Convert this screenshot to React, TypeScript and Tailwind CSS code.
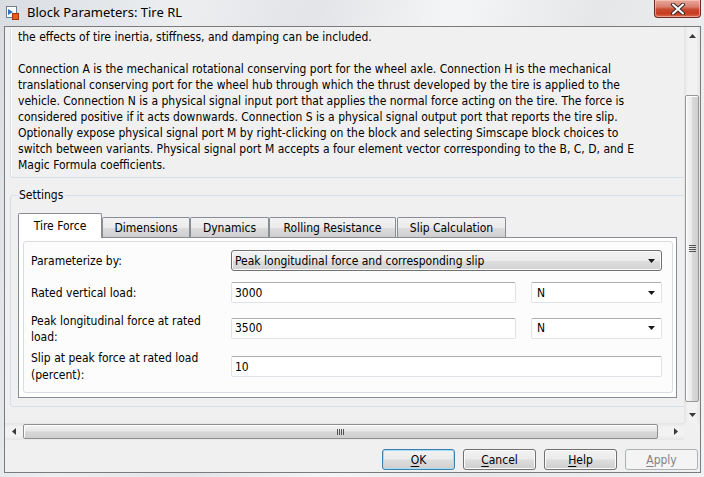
import React from "react";

const BODY =
  "font-['DejaVu_Sans_Condensed','DejaVu_Sans',sans-serif] [font-stretch:condensed] text-[12px]";

function Tri({ dir, color = "#1a1a1a" }: { dir: "up" | "down" | "left" | "right"; color?: string }) {
  if (dir === "up")
    return (
      <svg width="7" height="4" viewBox="0 0 7 4">
        <path d="M0 4 L3.5 0 L7 4 Z" fill={color} />
      </svg>
    );
  if (dir === "down")
    return (
      <svg width="7" height="4" viewBox="0 0 7 4">
        <path d="M0 0 L7 0 L3.5 4 Z" fill={color} />
      </svg>
    );
  if (dir === "left")
    return (
      <svg width="4" height="7" viewBox="0 0 4 7">
        <path d="M4 0 L4 7 L0 3.5 Z" fill={color} />
      </svg>
    );
  return (
    <svg width="4" height="7" viewBox="0 0 4 7">
      <path d="M0 0 L4 3.5 L0 7 Z" fill={color} />
    </svg>
  );
}

function BlockIcon() {
  return (
    <svg width="14" height="15" viewBox="0 0 14 15">
      <rect x="0.5" y="0.5" width="10" height="11" fill="#fff" stroke="#6d7f93" />
      <path d="M2 3 L7 6 L2 9 Z" fill="#2f6fc4" />
      <rect x="6.5" y="7.5" width="6" height="6" fill="#f05a1a" stroke="#a13307" />
    </svg>
  );
}

function CloseX() {
  return (
    <svg width="16" height="12" viewBox="0 0 16 12">
      <path d="M3 1.5 L13 10.5 M13 1.5 L3 10.5" stroke="#3b2a2a" strokeWidth="4" strokeLinecap="round" />
      <path d="M3 1.5 L13 10.5 M13 1.5 L3 10.5" stroke="#ffffff" strokeWidth="2" strokeLinecap="round" />
    </svg>
  );
}

const hiddenLine =
  "Represents a tire with longitudinal behavior given by the Magic Formula, an empirical equation. Optionally,";

const descLines = [
  "the effects of tire inertia, stiffness, and damping can be included.",
  "",
  "Connection A is the mechanical rotational conserving port for the wheel axle. Connection H is the mechanical",
  "translational conserving port for the wheel hub through which the thrust developed by the tire is applied to the",
  "vehicle. Connection N is a physical signal input port that applies the normal force acting on the tire. The force is",
  "considered positive if it acts downwards. Connection S is a physical signal output port that reports the tire slip.",
  "Optionally expose physical signal port M by right-clicking on the block and selecting Simscape block choices to",
  "switch between variants. Physical signal port M accepts a four element vector corresponding to the B, C, D, and E",
  "Magic Formula coefficients.",
];

function TextBox({ value, className = "" }: { value: string; className?: string }) {
  return (
    <div
      className={
        "h-[21px] rounded-[2px] border border-[#dfe3e8] border-t-[#abadb3] bg-white flex items-center pl-[3px] " +
        className
      }
    >
      {value}
    </div>
  );
}

function UnitBox({ value }: { value: string }) {
  return (
    <div className="ml-[15px] w-[131px] h-[21px] rounded-[2px] border border-[#dfe3e8] border-t-[#abadb3] bg-white flex items-center pl-[5px] pr-[6px]">
      <span className="flex-1">{value}</span>
      <Tri dir="down" />
    </div>
  );
}

function Button({ children, kind = "normal" }: { children: React.ReactNode; kind?: "normal" | "default" | "disabled" }) {
  const base = "w-[73px] h-[21px] rounded-[3px] border flex items-center justify-center";
  const cls =
    kind === "disabled"
      ? "border-[#adb2b5] bg-[#f4f4f4] text-[#838383]"
      : kind === "default"
      ? "border-[#3c7fb1] shadow-[inset_0_0_0_1px_#a6dcf7] bg-[linear-gradient(180deg,#f2f2f2_0%,#ebebeb_48%,#dddddd_52%,#cfcfcf_100%)] text-black"
      : "border-[#707070] shadow-[inset_0_0_0_1px_#fcfcfc] bg-[linear-gradient(180deg,#f2f2f2_0%,#ebebeb_48%,#dddddd_52%,#cfcfcf_100%)] text-black";
  return <div className={base + " " + cls}>{children}</div>;
}

const tabs = [
  { name: "Tire Force", w: "w-[84px]" },
  { name: "Dimensions", w: "w-[88px]" },
  { name: "Dynamics", w: "w-[79px]" },
  { name: "Rolling Resistance", w: "w-[127px]" },
  { name: "Slip Calculation", w: "w-[109px] ml-[1px]" },
];

export default function App() {
  return (
    <div
      className={
        "w-[704px] h-[477px] flex flex-col overflow-hidden text-black bg-[linear-gradient(105deg,#d9dde2_0%,#eceef0_22%,#e2e4e7_38%,#f4f5f6_55%,#e5e7e9_72%,#f1f2f3_100%)] " +
        BODY
      }
    >
      {/* Title bar */}
      <div className="h-[26px] shrink-0 flex items-start">
        <div className="ml-[6px] mt-[6px]">
          <BlockIcon />
        </div>
        <div className="ml-[7px] mt-[3px] text-[13px] leading-[18px] font-['Noto_Sans',sans-serif] [font-stretch:normal]">
          Block Parameters: Tire RL
        </div>
        <div className="ml-auto mr-[3px] w-[47px] h-[18px] rounded-b-[4px] border border-t-0 border-[#6b2a22] bg-[linear-gradient(180deg,#e9a99b_0%,#d7806e_40%,#c74a30_55%,#c83b1f_80%,#d96b50_100%)] shadow-[inset_0_0_0_1px_rgba(255,210,200,0.55)] flex items-center justify-center">
          <CloseX />
        </div>
      </div>

      {/* Client area */}
      <div className="flex-1 min-h-0 ml-[4px] mr-[3px] mb-[4px] border border-[#7b7b7b] bg-[#f0f0f0] flex flex-col">
        {/* viewport + vertical scrollbar */}
        <div className="h-[396px] shrink-0 flex">
          <div className="flex-1 overflow-hidden">
            <div className="w-[720px] pl-[5px] flex flex-col">
              {/* description group */}
              <div className="mt-[-20px] w-[700px] border border-[#d5dfe5] rounded-[3px] shadow-[inset_1px_1px_0_#ffffff] pt-[5px] pb-[4px] pl-[7px]">
                <div className="h-[16px] leading-[11px] whitespace-nowrap overflow-hidden">{hiddenLine}</div>
                {descLines.map((l, i) => (
                  <div key={i} className="h-[16px] leading-[16px] whitespace-nowrap">
                    {l}
                  </div>
                ))}
              </div>

              {/* Settings group */}
              <fieldset className="mt-[9px] w-[700px] border border-[#d5dfe5] rounded-[3px] pl-[7px] pb-[8px]">
                <legend className="ml-[-1px] px-[2px] leading-[16px]">Settings</legend>
                <div className="mt-[10px] h-[24px] flex items-end">
                  {tabs.map((t, i) =>
                    i === 0 ? (
                      <div
                        key={t.name}
                        className={
                          t.w +
                          " h-[25px] mb-[-1px] relative z-10 bg-white border border-b-0 border-[#898c95] rounded-t-[2px] flex items-center justify-center"
                        }
                      >
                        {t.name}
                      </div>
                    ) : (
                      <div
                        key={t.name}
                        className={
                          t.w +
                          " h-[20px] border border-b-0 border-[#898c95] rounded-t-[2px] bg-[linear-gradient(180deg,#f3f3f3_0%,#ebebeb_50%,#dddddd_51%,#cfcfcf_100%)] flex items-center justify-center"
                        }
                      >
                        {t.name}
                      </div>
                    )
                  )}
                </div>
                <div className="w-[659px] h-[161px] border border-[#898c95] bg-white flex flex-col">
                  <div className="flex-1 mt-[3px] ml-[4px] mr-[3px] mb-[4px] border border-[#d9dde2] rounded-[3px] bg-[#fcfcfc] pt-[8px] pl-[7px] pr-[10px] flex flex-col leading-[16px]">
                    <div className="h-[21px] flex items-center">
                      <div className="w-[200px]">Parameterize by:</div>
                      <div className="flex-1 h-[21px] rounded-[3px] border border-[#707070] shadow-[inset_0_0_0_1px_#fafafa] bg-[linear-gradient(180deg,#f2f2f2_0%,#ebebeb_50%,#dddddd_51%,#d3d3d3_100%)] flex items-center pl-[3px] pr-[6px]">
                        <span className="flex-1">Peak longitudinal force and corresponding slip</span>
                        <Tri dir="down" />
                      </div>
                    </div>
                    <div className="mt-[11px] h-[21px] flex items-center">
                      <div className="w-[200px]">Rated vertical load:</div>
                      <TextBox value="3000" className="w-[285px]" />
                      <UnitBox value="N" />
                    </div>
                    <div className="mt-[9px] h-[32px] flex items-center">
                      <div className="w-[200px] pt-[2px]">
                        <div>Peak longitudinal force at rated</div>
                        <div>load:</div>
                      </div>
                      <TextBox value="3500" className="w-[285px]" />
                      <UnitBox value="N" />
                    </div>
                    <div className="mt-[6px] h-[33px] flex items-center">
                      <div className="w-[200px] leading-[17px]">
                        <div>Slip at peak force at rated load</div>
                        <div>(percent):</div>
                      </div>
                      <TextBox value="10" className="flex-1" />
                    </div>
                  </div>
                </div>
              </fieldset>
            </div>
          </div>

          {/* vertical scrollbar */}
          <div className="w-[16px] flex flex-col bg-[linear-gradient(90deg,#e3e3e3,#f2f2f2_25%,#f2f2f2_75%,#e6e6e6)]">
            <div className="h-[17px] flex items-center justify-center">
              <Tri dir="up" color="#3a3a3a" />
            </div>
            <div className="flex-1 flex flex-col">
              <div className="h-[51px]" />
              <div className="h-[307px] mx-[1px] rounded-[2px] border border-[#979797] bg-[linear-gradient(90deg,#f5f5f5_0%,#ebebeb_45%,#d9d9d9_55%,#d0d0d0_100%)] shadow-[inset_1px_1px_0_#ffffff] flex items-center justify-center">
                <div className="flex flex-col gap-[1px]">
                  <div className="w-[7px] h-[1px] bg-[#555]" />
                  <div className="w-[7px] h-[1px] bg-[#555]" />
                  <div className="w-[7px] h-[1px] bg-[#555]" />
                  <div className="w-[7px] h-[1px] bg-[#555]" />
                </div>
              </div>
            </div>
            <div className="h-[17px] flex items-center justify-center">
              <Tri dir="down" color="#3a3a3a" />
            </div>
          </div>
        </div>

        {/* horizontal scrollbar */}
        <div className="h-[17px] shrink-0 flex">
          <div className="flex-1 flex bg-[linear-gradient(180deg,#e3e3e3,#f2f2f2_25%,#f2f2f2_75%,#e6e6e6)]">
            <div className="w-[17px] flex items-center justify-center">
              <Tri dir="left" color="#3a3a3a" />
            </div>
            <div className="flex-1 flex">
              <div className="ml-[1px] w-[635px] h-[15px] mt-[1px] rounded-[2px] border border-[#8e8f8f] bg-[linear-gradient(180deg,#f3f3f3_0%,#e8e8e8_45%,#d6d6d6_55%,#cfcfcf_100%)] shadow-[inset_1px_1px_0_#ffffff] flex items-center justify-center">
                <div className="flex gap-[1px]">
                  <div className="w-[1px] h-[6px] bg-[#555]" />
                  <div className="w-[1px] h-[6px] bg-[#555]" />
                  <div className="w-[1px] h-[6px] bg-[#555]" />
                  <div className="w-[1px] h-[6px] bg-[#555]" />
                </div>
              </div>
            </div>
            <div className="w-[17px] flex items-center justify-center">
              <Tri dir="right" color="#3a3a3a" />
            </div>
          </div>
          <div className="w-[16px] bg-[#f0f0f0]" />
        </div>

        {/* buttons */}
        <div className="flex-1 flex justify-end items-start pt-[9px] pr-[2px] gap-[8px]">
          <Button kind="default">
            <span className="underline underline-offset-2">O</span>K
          </Button>
          <Button>
            <span className="underline underline-offset-2">C</span>ancel
          </Button>
          <Button>
            <span className="underline underline-offset-2">H</span>elp
          </Button>
          <Button kind="disabled">
            <span className="underline underline-offset-2">A</span>pply
          </Button>
        </div>
      </div>
    </div>
  );
}
